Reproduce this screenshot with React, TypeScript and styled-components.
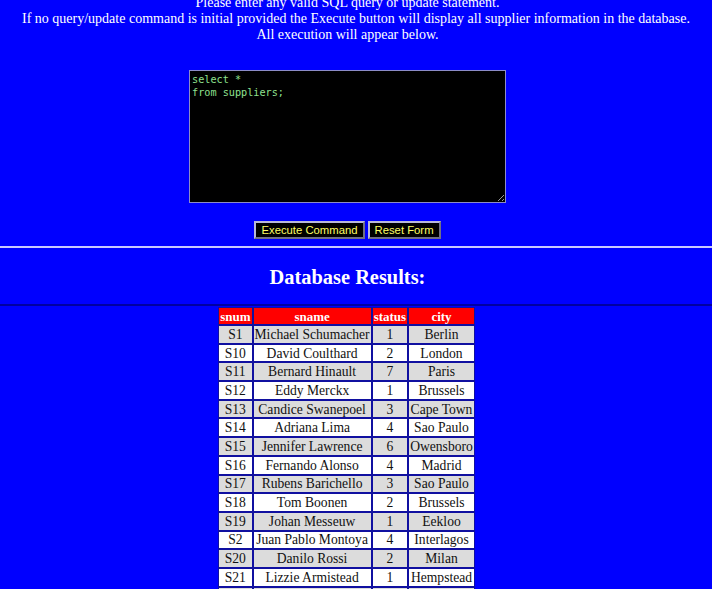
import styled, { createGlobalStyle } from 'styled-components';

const rows = [
  ['S1', 'Michael Schumacher', '1', 'Berlin'],
  ['S10', 'David Coulthard', '2', 'London'],
  ['S11', 'Bernard Hinault', '7', 'Paris'],
  ['S12', 'Eddy Merckx', '1', 'Brussels'],
  ['S13', 'Candice Swanepoel', '3', 'Cape Town'],
  ['S14', 'Adriana Lima', '4', 'Sao Paulo'],
  ['S15', 'Jennifer Lawrence', '6', 'Owensboro'],
  ['S16', 'Fernando Alonso', '4', 'Madrid'],
  ['S17', 'Rubens Barichello', '3', 'Sao Paulo'],
  ['S18', 'Tom Boonen', '2', 'Brussels'],
  ['S19', 'Johan Messeuw', '1', 'Eekloo'],
  ['S2', 'Juan Pablo Montoya', '4', 'Interlagos'],
  ['S20', 'Danilo Rossi', '2', 'Milan'],
  ['S21', 'Lizzie Armistead', '1', 'Hempstead'],
  ['S22', 'Eddy Merckx', '1', 'Brussels'],
];

const GlobalStyle = createGlobalStyle`
  html, body {
    margin: 0;
    padding: 0;
    background: #0000ff;
    overflow: hidden;
  }
  body {
    font-family: 'Liberation Serif', 'Times New Roman', serif;
    color: #ffffff;
  }
`;

// the page is shown scrolled a little, so the first line sits under the top edge
const Page = styled.div`
  display: flex;
  flex-direction: column;
  align-items: center;
  margin-top: -5px;
  padding-right: 17px;
`;

const IntroLine = styled.div<{ $wide?: boolean }>`
  font-size: 14px;
  line-height: 16px;
  text-align: center;
  white-space: nowrap;
  margin-right: ${p => (p.$wide ? '-17px' : '0')};
`;

const Editor = styled.textarea`
  box-sizing: border-box;
  flex-shrink: 0;
  margin-top: 27px;
  width: 317px;
  height: 133px;
  background: #000000;
  color: #8fe08f;
  border: 1px solid #8c8cc8;
  padding: 2px;
  font-family: 'DejaVu Sans Mono', 'Liberation Mono', monospace;
  font-size: 10.2px;
  line-height: 13px;
  resize: both;
`;

const ButtonRow = styled.div`
  display: flex;
  gap: 3px;
  margin-top: 18px;
`;

const Button = styled.button`
  box-sizing: border-box;
  height: 18px;
  padding: 0 5px;
  background: #000000;
  color: #ffff66;
  border: 2px outset #b8b8d8;
  font-family: 'Liberation Sans', Arial, sans-serif;
  font-size: 11.3px;
  line-height: 13px;
  cursor: pointer;
`;

const Rule = styled.hr<{ $dark?: boolean }>`
  align-self: stretch;
  margin: ${p => (p.$dark ? '0' : '7px 0 0')};
  margin-right: -17px;
  border: none;
  height: 2px;
  background: ${p => (p.$dark ? '#0000a0' : '#c8c8ff')};
`;

const Heading = styled.h2`
  margin: 17px 0 15px;
  font-size: 20.4px;
  line-height: 24px;
  font-weight: bold;
  text-align: center;
`;

const Table = styled.table`
  margin-top: 1px;
  margin-right: 2px;
  border-collapse: separate;
  border-spacing: 0;
  background: #0000ff;
  font-size: 13.6px;
  text-align: center;
`;

const Th = styled.th`
  background: #ff0000;
  color: #ffffff;
  font-weight: bold;
  font-size: 13px;
  height: 16px;
  padding: 0 1px;
  border: 1px solid #1010a0;
  line-height: 15px;
`;

const Td = styled.td<{ $alt: boolean }>`
  background: ${p => (p.$alt ? '#dcdcdc' : '#ffffff')};
  color: #111111;
  height: 16.7px;
  padding: 0 1px;
  border: 1px solid #1010a0;
  line-height: 15px;
`;

export default function App() {
  return (
    <>
      <GlobalStyle />
      <Page>
        <IntroLine>Please enter any valid SQL query or update statement.</IntroLine>
        <IntroLine $wide>
          If no query/update command is initial provided the Execute button will display all supplier information in the database.
        </IntroLine>
        <IntroLine>All execution will appear below.</IntroLine>
        <Editor defaultValue={'select *\nfrom suppliers;'} spellCheck={false} />
        <ButtonRow>
          <Button>Execute Command</Button>
          <Button>Reset Form</Button>
        </ButtonRow>
        <Rule />
        <Heading>Database Results:</Heading>
        <Rule $dark />
        <Table>
          <thead>
            <tr>
              <Th>snum</Th>
              <Th>sname</Th>
              <Th>status</Th>
              <Th>city</Th>
            </tr>
          </thead>
          <tbody>
            {rows.map((r, i) => (
              <tr key={r[0]}>
                {r.map((c, j) => (
                  <Td key={j} $alt={i % 2 === 0}>
                    {c}
                  </Td>
                ))}
              </tr>
            ))}
          </tbody>
        </Table>
      </Page>
    </>
  );
}
